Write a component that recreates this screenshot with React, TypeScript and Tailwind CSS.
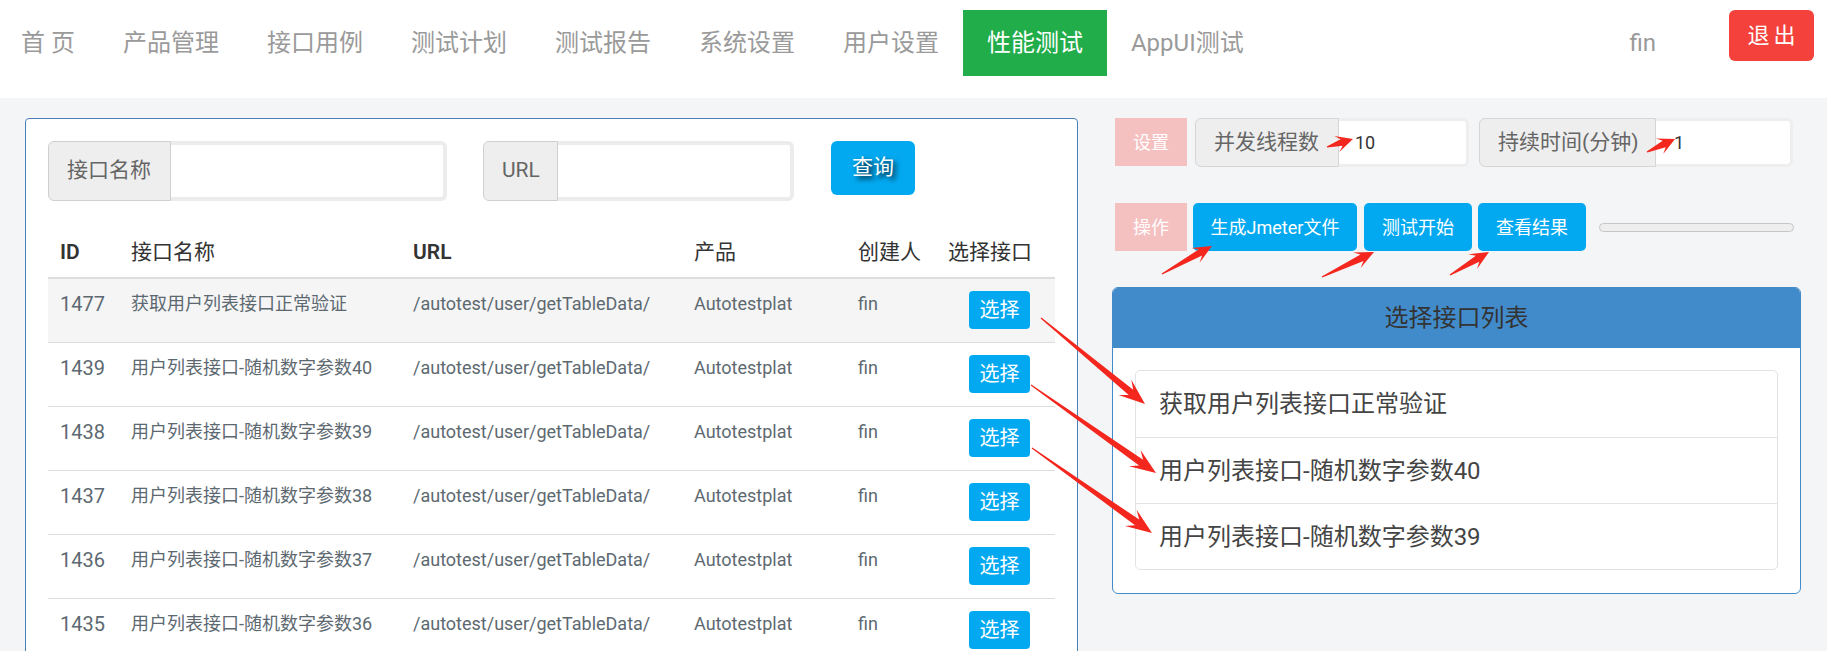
const navItems = ['首 页', '产品管理', '接口用例', '测试计划', '测试报告', '系统设置', '用户设置', '性能测试', 'AppUI测试'];

const rows = [
  { id: 1477, name: '获取用户列表接口正常验证' },
  { id: 1439, name: '用户列表接口-随机数字参数40' },
  { id: 1438, name: '用户列表接口-随机数字参数39' },
  { id: 1437, name: '用户列表接口-随机数字参数38' },
  { id: 1436, name: '用户列表接口-随机数字参数37' },
  { id: 1435, name: '用户列表接口-随机数字参数36' },
  { id: 1434, name: '用户列表接口-随机数字参数35' },
];

const picked = ['获取用户列表接口正常验证', '用户列表接口-随机数字参数40', '用户列表接口-随机数字参数39'];

// 标注箭头 (截图上的红色箭头)
const arrows = [
  { x1: 1041, y1: 318, x2: 1145, y2: 404, hl: 26, hw: 20, sw: 7 },
  { x1: 1031, y1: 385, x2: 1156, y2: 473, hl: 26, hw: 20, sw: 7 },
  { x1: 1032, y1: 448, x2: 1152, y2: 533, hl: 26, hw: 20, sw: 7 },
  { x1: 1327, y1: 147, x2: 1353, y2: 139, hl: 17, hw: 17, sw: 7 },
  { x1: 1647, y1: 152, x2: 1675, y2: 139, hl: 17, hw: 17, sw: 7 },
  { x1: 1162, y1: 274, x2: 1212, y2: 246, hl: 19, hw: 17, sw: 7 },
  { x1: 1322, y1: 277, x2: 1374, y2: 252, hl: 19, hw: 17, sw: 7 },
  { x1: 1450, y1: 275, x2: 1489, y2: 252, hl: 19, hw: 17, sw: 7 },
];

const arrowPoints = (a: (typeof arrows)[number]) => {
  const dx = a.x2 - a.x1;
  const dy = a.y2 - a.y1;
  const len = Math.sqrt(dx * dx + dy * dy);
  const ux = dx / len;
  const uy = dy / len;
  const nx = -uy;
  const ny = ux;
  const sx = a.x2 - ux * a.hl * 0.7;
  const sy = a.y2 - uy * a.hl * 0.7;
  const bx = a.x2 - ux * a.hl;
  const by = a.y2 - uy * a.hl;
  const pts = [
    [a.x1 + nx * 0.6, a.y1 + ny * 0.6],
    [sx + (nx * a.sw) / 2, sy + (ny * a.sw) / 2],
    [bx + (nx * a.hw) / 2, by + (ny * a.hw) / 2],
    [a.x2, a.y2],
    [bx - (nx * a.hw) / 2, by - (ny * a.hw) / 2],
    [sx - (nx * a.sw) / 2, sy - (ny * a.sw) / 2],
    [a.x1 - nx * 0.6, a.y1 - ny * 0.6],
  ];
  return pts.map((p) => `${p[0].toFixed(1)},${p[1].toFixed(1)}`).join(' ');
};

const SearchGroup = ({ label, labelW, inputW }: { label: string; labelW: string; inputW: string }) => (
  <div className="flex h-[60px]">
    <div className={`flex items-center rounded-l-[6px] border border-[#cfcfcf] bg-[#eeeeee] pl-[18px] text-[21px] text-[#666] ${labelW}`}>
      {label}
    </div>
    <div className={`rounded-r-[6px] border-[4px] border-l-0 border-[#ececec] bg-white ${inputW}`} />
  </div>
);

const App = () => {
  return (
    <div className="relative h-[651px] w-[1827px] overflow-hidden bg-[#f4f5f7] font-[family-name:Roboto,'Noto_Sans_CJK_SC',sans-serif]">
      {/* 顶部导航 */}
      <nav className="-ml-[3px] flex h-[98px] items-start bg-white pt-[10px]">
        {navItems.map((item) => (
          <div
            key={item}
            className={
              item === '性能测试'
                ? 'flex h-[66px] items-center whitespace-pre bg-[#22ad4b] px-6 text-[24px] text-white'
                : 'flex h-[66px] items-center whitespace-pre px-6 text-[24px] text-[#9a9a9a]'
            }
          >
            {item}
          </div>
        ))}
        <div className="ml-auto flex h-[66px] items-center text-[24px] text-[#9a9a9a]">fin</div>
        <button className="ml-[73px] mr-[13px] flex h-[51px] w-[85px] items-center justify-center rounded-[6px] bg-[#f4413b] pl-[4px] text-[22px] tracking-[4px] text-white">
          退出
        </button>
      </nav>

      <div className="flex items-start gap-[34px] pl-[25px] pt-[20px]">
        {/* 左侧接口列表 */}
        <div className="w-[1053px] rounded-[4px] border border-[#4a80b8] bg-white px-[22px] pt-[22px]">
          <div className="flex items-start">
            <SearchGroup label="接口名称" labelW="w-[123px]" inputW="w-[276px]" />
            <div className="ml-[36px]">
              <SearchGroup label="URL" labelW="w-[75px]" inputW="w-[236px]" />
            </div>
            <button className="ml-[37px] h-[54px] w-[84px] rounded-[6px] bg-[#03a9f0] text-[21px] text-white [text-shadow:3px_3px_5px_rgba(0,0,0,0.85)]">
              查询
            </button>
          </div>

          <div className="mt-[1px]">
            <div className="grid h-[77px] grid-cols-[71px_282px_281px_164px_90px_1fr] items-end border-b-2 border-[#dddddd] pb-[10px] text-[21px] leading-[1.43] text-[#333]">
              <div className="pl-3 font-semibold">ID</div>
              <div className="pl-3">接口名称</div>
              <div className="pl-3 font-semibold">URL</div>
              <div className="pl-3">产品</div>
              <div className="pl-3">创建人</div>
              <div className="pl-3">选择接口</div>
            </div>
            {rows.map((r, i) => (
              <div
                key={r.id}
                className={`grid h-[64px] grid-cols-[71px_282px_281px_164px_90px_1fr] border-b border-[#dddddd] text-[#5d6971] ${i === 0 ? 'bg-[#f5f5f5]' : ''}`}
              >
                <div className="pl-3 pt-[11px] text-[20px] leading-[1.43]">{r.id}</div>
                <div className="pl-3 pt-[12px] text-[18px] leading-[1.43]">{r.name}</div>
                <div className="pl-3 pt-[12px] text-[18px] leading-[1.43]">/autotest/user/getTableData/</div>
                <div className="pl-3 pt-[12px] text-[18px] leading-[1.43]">Autotestplat</div>
                <div className="pl-3 pt-[12px] text-[18px] leading-[1.43]">fin</div>
                <div className="pl-[33px] pt-[12px]">
                  <button className="h-[38px] w-[61px] rounded-[4px] bg-[#03a9f0] text-[20px] text-white">选择</button>
                </div>
              </div>
            ))}
          </div>
        </div>

        {/* 右侧性能测试设置 */}
        <div className="w-[689px]">
          <div className="flex items-start pl-[3px]">
            <div className="flex h-[48px] w-[72px] items-center justify-center bg-[#f5c0c0] text-[18px] text-white">设置</div>
            <div className="ml-[8px] flex h-[49px]">
              <div className="flex w-[144px] items-center rounded-l-[6px] border border-[#d6d6d6] bg-[#eeeeee] pl-[18px] text-[21px] text-[#666]">
                并发线程数
              </div>
              <div className="flex w-[130px] items-center rounded-r-[6px] border-[3px] border-l-0 border-[#eeeeee] bg-white pl-[16px] text-[18px] text-[#333]">
                10
              </div>
            </div>
            <div className="ml-[10px] flex h-[49px]">
              <div className="flex w-[177px] items-center rounded-l-[6px] border border-[#d6d6d6] bg-[#eeeeee] pl-[18px] text-[21px] text-[#666]">
                持续时间(分钟)
              </div>
              <div className="flex w-[137px] items-center rounded-r-[6px] border-[3px] border-l-0 border-[#eeeeee] bg-white pl-[18px] text-[18px] text-[#333]">
                1
              </div>
            </div>
          </div>

          <div className="mt-[36px] flex items-center pl-[3px]">
            <div className="flex h-[48px] w-[72px] items-center justify-center bg-[#f5c0c0] text-[18px] text-white">操作</div>
            <button className="ml-[6px] h-[48px] w-[164px] rounded-[5px] bg-[#03a9f0] text-[18px] text-white">生成Jmeter文件</button>
            <button className="ml-[7px] h-[48px] w-[108px] rounded-[5px] bg-[#03a9f0] text-[18px] text-white">测试开始</button>
            <button className="ml-[6px] h-[48px] w-[108px] rounded-[5px] bg-[#03a9f0] text-[18px] text-white">查看结果</button>
            <div className="ml-[13px] h-[9px] w-[195px] rounded-full border border-[#c6c6c6] bg-[#eeeeee]" />
          </div>

          <div className="mt-[36px] overflow-hidden rounded-[6px] border border-[#428bca] bg-white">
            <div className="flex h-[60px] items-center justify-center bg-[#428bca] text-[24px] text-[#333]">选择接口列表</div>
            <div className="px-[22px] pb-[23px] pt-[22px]">
              <div className="rounded-[5px] border border-[#e3e3e3]">
                {picked.map((name, i) => (
                  <div
                    key={name}
                    className={`flex h-[66px] items-center pl-[23px] text-[24px] text-[#444] ${i > 0 ? 'border-t border-[#e3e3e3]' : ''}`}
                  >
                    {name}
                  </div>
                ))}
              </div>
            </div>
          </div>
        </div>
      </div>

      <svg className="pointer-events-none absolute left-0 top-0" width={1827} height={651}>
        {arrows.map((a, i) => (
          <polygon key={i} points={arrowPoints(a)} fill="#f3271d" />
        ))}
      </svg>
    </div>
  );
};

export default App;
